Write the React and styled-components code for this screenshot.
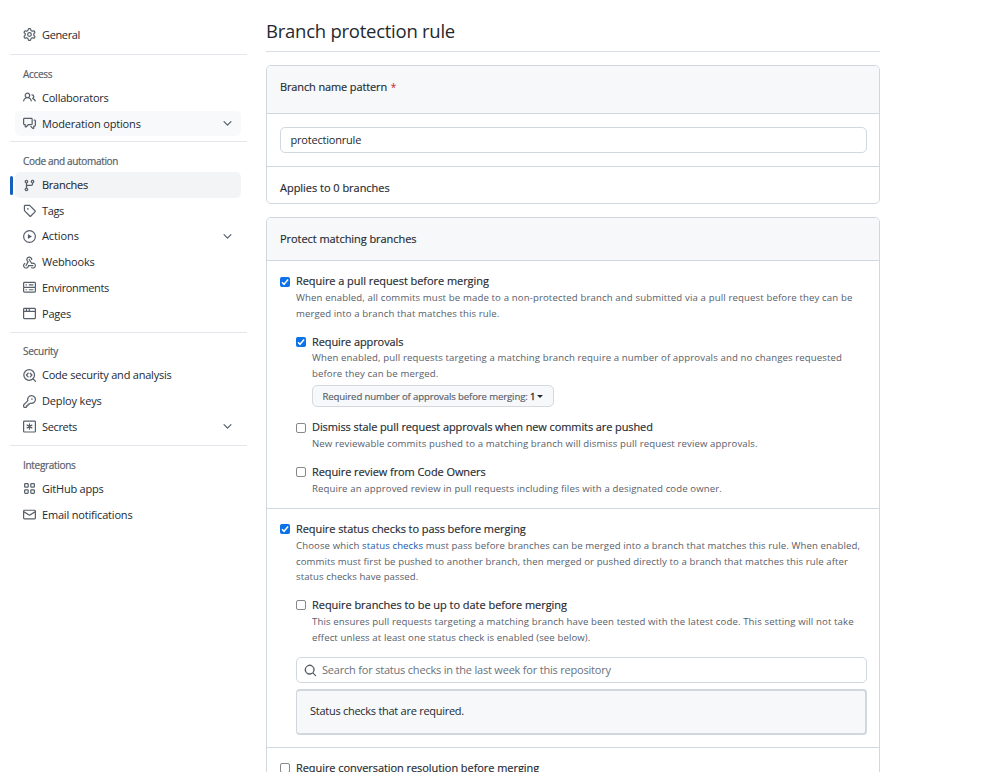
import React from 'react';
import styled, { createGlobalStyle } from 'styled-components';

const Global = createGlobalStyle`
  * { box-sizing: border-box; }
  html, body { margin: 0; background: #fff; }
  body {
    height: 772px;
    overflow: hidden;
    font-family: "Open Sans", "Noto Sans", sans-serif;
    font-size: 11px;
    color: #24292f;
  }
`;

const paths = {
  gear: 'M8 0a8.2 8.2 0 0 1 .701.031C9.444.095 9.99.645 10.16 1.29l.288 1.107c.018.066.079.158.212.224.231.114.454.243.668.386.123.082.233.09.299.071l1.103-.303c.644-.176 1.392.021 1.82.63.27.385.506.792.704 1.218.315.675.111 1.422-.364 1.891l-.814.806c-.049.048-.098.147-.088.294.016.257.016.515 0 .772-.01.147.038.246.088.294l.814.806c.475.469.679 1.216.364 1.891a7.977 7.977 0 0 1-.704 1.217c-.428.61-1.176.807-1.82.63l-1.102-.302c-.067-.019-.177-.011-.3.071a5.909 5.909 0 0 1-.668.386c-.133.066-.194.158-.211.224l-.29 1.106c-.168.646-.715 1.196-1.458 1.26a8.006 8.006 0 0 1-1.402 0c-.743-.064-1.289-.614-1.458-1.26l-.289-1.106c-.018-.066-.079-.158-.212-.224a5.738 5.738 0 0 1-.668-.386c-.123-.082-.233-.09-.299-.071l-1.103.303c-.644.176-1.392-.021-1.82-.63a8.12 8.12 0 0 1-.704-1.218c-.315-.675-.111-1.422.363-1.891l.815-.806c.05-.048.098-.147.088-.294a6.214 6.214 0 0 1 0-.772c.01-.147-.038-.246-.088-.294l-.815-.806C.635 6.045.431 5.298.746 4.623a7.92 7.92 0 0 1 .704-1.217c.428-.61 1.176-.807 1.82-.63l1.102.302c.067.019.177.011.3-.071.214-.143.437-.272.668-.386.133-.066.194-.158.211-.224l.29-1.106C6.009.645 6.556.095 7.299.03 7.53.01 7.764 0 8 0Zm-.571 1.525c-.036.003-.108.036-.137.146l-.289 1.105c-.147.561-.549.967-.998 1.189-.173.086-.34.183-.5.29-.417.278-.97.423-1.529.27l-1.103-.303c-.109-.03-.175.016-.195.045-.22.312-.412.644-.573.99-.014.031-.021.11.059.19l.815.806c.411.406.562.957.53 1.456a4.709 4.709 0 0 0 0 .582c.032.499-.119 1.05-.53 1.456l-.815.806c-.081.08-.073.159-.059.19.162.346.353.677.573.989.02.03.085.076.195.046l1.102-.303c.56-.153 1.113-.008 1.53.27.161.107.328.204.501.29.447.222.85.629.997 1.189l.289 1.105c.029.109.101.143.137.146a6.6 6.6 0 0 0 1.142 0c.036-.003.108-.036.137-.146l.289-1.105c.147-.561.549-.967.998-1.189.173-.086.34-.183.5-.29.417-.278.97-.423 1.529-.27l1.103.303c.109.029.175-.016.195-.045.22-.313.411-.644.573-.99.014-.031.021-.11-.059-.19l-.815-.806c-.411-.406-.562-.957-.53-1.456a4.709 4.709 0 0 0 0-.582c-.032-.499.119-1.05.53-1.456l.815-.806c.081-.08.073-.159.059-.19a6.464 6.464 0 0 0-.573-.989c-.02-.03-.085-.076-.195-.046l-1.102.303c-.56.153-1.113.008-1.53-.27a4.44 4.44 0 0 0-.501-.29c-.447-.222-.85-.629-.997-1.189l-.289-1.105c-.029-.11-.101-.143-.137-.146a6.6 6.6 0 0 0-1.142 0ZM11 8a3 3 0 1 1-6 0 3 3 0 0 1 6 0ZM9.5 8a1.5 1.5 0 1 0-3.001.001A1.5 1.5 0 0 0 9.5 8Z',
  people: 'M2 5.5a3.5 3.5 0 1 1 5.898 2.549 5.508 5.508 0 0 1 3.034 4.084.75.75 0 1 1-1.482.235 4 4 0 0 0-7.9 0 .75.75 0 0 1-1.482-.236A5.507 5.507 0 0 1 3.102 8.05 3.493 3.493 0 0 1 2 5.5ZM11 4a3.001 3.001 0 0 1 2.22 5.018 5.01 5.01 0 0 1 2.56 3.012.749.749 0 0 1-.885.954.752.752 0 0 1-.549-.514 3.507 3.507 0 0 0-2.522-2.372.75.75 0 0 1-.574-.73v-.352a.75.75 0 0 1 .416-.672A1.5 1.5 0 0 0 11 5.5.75.75 0 0 1 11 4Zm-5.5-.5a2 2 0 1 0-.001 3.999A2 2 0 0 0 5.5 3.5Z',
  discussion: 'M1.75 1h8.5c.966 0 1.75.784 1.75 1.75v5.5A1.75 1.75 0 0 1 10.25 10H7.061l-2.574 2.573A1.458 1.458 0 0 1 2 11.543V10h-.25A1.75 1.75 0 0 1 0 8.25v-5.5C0 1.784.784 1 1.75 1ZM1.5 2.75v5.5c0 .138.112.25.25.25h1a.75.75 0 0 1 .75.75v2.19l2.72-2.72a.749.749 0 0 1 .53-.22h3.5a.25.25 0 0 0 .25-.25v-5.5a.25.25 0 0 0-.25-.25h-8.5a.25.25 0 0 0-.25.25Zm13 2a.25.25 0 0 0-.25-.25h-.5a.75.75 0 0 1 0-1.5h.5c.966 0 1.75.784 1.75 1.75v5.5A1.75 1.75 0 0 1 14.25 12H14v1.543a1.458 1.458 0 0 1-2.487 1.03L9.22 12.28a.749.749 0 1 1 1.06-1.06l2.22 2.22v-2.19a.75.75 0 0 1 .75-.75h1a.25.25 0 0 0 .25-.25Z',
  chevron: 'M12.78 5.22a.749.749 0 0 1 0 1.06l-4.25 4.25a.749.749 0 0 1-1.06 0L3.22 6.28a.749.749 0 1 1 1.06-1.06L8 8.939l3.72-3.719a.749.749 0 0 1 1.06 0Z',
  branch: 'M9.5 3.25a2.25 2.25 0 1 1 3 2.122V6A2.5 2.5 0 0 1 10 8.5H6a1 1 0 0 0-1 1v1.128a2.251 2.251 0 1 1-1.5 0V5.372a2.25 2.25 0 1 1 1.5 0v1.836A2.493 2.493 0 0 1 6 7h4a1 1 0 0 0 1-1v-.628A2.25 2.25 0 0 1 9.5 3.25Zm-6 0a.75.75 0 1 0 1.5 0 .75.75 0 0 0-1.5 0Zm8.25-.75a.75.75 0 1 0 0 1.5.75.75 0 0 0 0-1.5ZM4.25 12a.75.75 0 1 0 0 1.5.75.75 0 0 0 0-1.5Z',
  tag: 'M1 7.775V2.75C1 1.784 1.784 1 2.75 1h5.025c.464 0 .91.184 1.238.513l6.25 6.25a1.75 1.75 0 0 1 0 2.474l-5.026 5.026a1.75 1.75 0 0 1-2.474 0l-6.25-6.25A1.752 1.752 0 0 1 1 7.775Zm1.5 0c0 .066.026.13.073.177l6.25 6.25a.25.25 0 0 0 .354 0l5.025-5.025a.25.25 0 0 0 0-.354l-6.25-6.25a.25.25 0 0 0-.177-.073H2.75a.25.25 0 0 0-.25.25ZM6 5a1 1 0 1 1 0 2 1 1 0 0 1 0-2Z',
  play: 'M8 0a8 8 0 1 1 0 16A8 8 0 0 1 8 0ZM1.5 8a6.5 6.5 0 1 0 13 0 6.5 6.5 0 0 0-13 0Zm4.879-2.773 4.264 2.559a.25.25 0 0 1 0 .428l-4.264 2.559A.25.25 0 0 1 6 10.559V5.442a.25.25 0 0 1 .379-.215Z',
  webhook: 'M5.5 4.25a2.25 2.25 0 0 1 4.5 0 .75.75 0 0 0 1.5 0 3.75 3.75 0 1 0-6.14 2.889l-2.272 4.258a.75.75 0 0 0 1.324.706L7 7.25a.75.75 0 0 0-.309-1.015A2.25 2.25 0 0 1 5.5 4.25ZM7.364 3.607a.75.75 0 0 1 1.03.257l2.608 4.349a3.75 3.75 0 1 1-.628 6.785.75.75 0 0 1 .752-1.299 2.25 2.25 0 1 0-.033-3.88.75.75 0 0 1-1.03-.256L7.107 4.636a.75.75 0 0 1 .257-1.03ZM2.9 8.776A.75.75 0 0 1 2.625 9.8 2.25 2.25 0 1 0 6 11.75a.75.75 0 0 1 .75-.751h5.5a.75.75 0 0 1 0 1.5H7.425a3.751 3.751 0 1 1-5.55-3.998.75.75 0 0 1 1.024.274Z',
  server: 'M1.75 1h12.5c.966 0 1.75.784 1.75 1.75v4c0 .372-.116.717-.314 1 .198.283.314.628.314 1v4a1.75 1.75 0 0 1-1.75 1.75H1.75A1.75 1.75 0 0 1 0 12.75v-4c0-.358.109-.707.314-1a1.739 1.739 0 0 1-.314-1v-4C0 1.784.784 1 1.75 1ZM1.5 2.75v4c0 .138.112.25.25.25h12.5a.25.25 0 0 0 .25-.25v-4a.25.25 0 0 0-.25-.25H1.75a.25.25 0 0 0-.25.25Zm.25 5.75a.25.25 0 0 0-.25.25v4c0 .138.112.25.25.25h12.5a.25.25 0 0 0 .25-.25v-4a.25.25 0 0 0-.25-.25ZM7 4.75A.75.75 0 0 1 7.75 4h4.5a.75.75 0 0 1 0 1.5h-4.5A.75.75 0 0 1 7 4.75ZM7.75 10h4.5a.75.75 0 0 1 0 1.5h-4.5a.75.75 0 0 1 0-1.5ZM3 4.75A.75.75 0 0 1 3.75 4h.5a.75.75 0 0 1 0 1.5h-.5A.75.75 0 0 1 3 4.75ZM3.75 10h.5a.75.75 0 0 1 0 1.5h-.5a.75.75 0 0 1 0-1.5Z',
  browser: 'M0 2.75C0 1.784.784 1 1.75 1h12.5c.966 0 1.75.784 1.75 1.75v10.5A1.75 1.75 0 0 1 14.25 15H1.75A1.75 1.75 0 0 1 0 13.25ZM14.5 6h-13v7.25c0 .138.112.25.25.25h12.5a.25.25 0 0 0 .25-.25Zm-6-3.5v2h6V2.75a.25.25 0 0 0-.25-.25ZM5 2.5v2h2v-2Zm-3.25 0a.25.25 0 0 0-.25.25V4.5h2v-2Z',
  key: 'M10.5 0a5.499 5.499 0 1 1-1.288 10.848l-.932.932a.749.749 0 0 1-.53.22H7v.75a.749.749 0 0 1-.22.53l-.5.5a.749.749 0 0 1-.53.22H5v.75a.749.749 0 0 1-.22.53l-.5.5a.749.749 0 0 1-.53.22h-2A1.75 1.75 0 0 1 0 14.25v-2c0-.199.079-.389.22-.53l4.932-4.932A5.5 5.5 0 0 1 10.5 0Zm-4 5.5c-.001.431.069.86.205 1.269a.75.75 0 0 1-.181.768L1.5 12.56v1.69c0 .138.112.25.25.25h1.69l.06-.06v-1.19a.75.75 0 0 1 .75-.75h1.19l.06-.06v-1.19a.75.75 0 0 1 .75-.75h1.19l1.023-1.025a.75.75 0 0 1 .768-.18A4 4 0 1 0 6.5 5.5ZM11 6a1 1 0 1 1 0-2 1 1 0 0 1 0 2Z',
  mail: 'M1.75 2h12.5c.966 0 1.75.784 1.75 1.75v8.5A1.75 1.75 0 0 1 14.25 14H1.75A1.75 1.75 0 0 1 0 12.25v-8.5C0 2.784.784 2 1.75 2ZM1.5 12.251c0 .138.112.25.25.25h12.5a.25.25 0 0 0 .25-.25V5.809L8.38 9.397a.75.75 0 0 1-.76 0L1.5 5.809v6.442Zm13-8.181v-.32a.25.25 0 0 0-.25-.25H1.75a.25.25 0 0 0-.25.25v.32L8 7.88Z',
  search: 'M10.68 11.74a6 6 0 0 1-7.922-8.982 6 6 0 0 1 8.982 7.922l3.04 3.04a.749.749 0 1 1-1.06 1.06ZM11.5 7a4.499 4.499 0 1 0-8.997 0A4.499 4.499 0 0 0 11.5 7Z',
};

const strokes = {
  codescan: (
    <>
      <circle cx="7.6" cy="7.4" r="6.6" />
      <path d="M12.4 12.2 15.3 15.1M6.3 5.2 4.2 7.4l2.1 2.2M8.9 5.2 11 7.4 8.9 9.6" />
    </>
  ),
  asterisk: (
    <>
      <rect x=".75" y="1.25" width="14.5" height="13.5" rx="1" />
      <path d="M8 4.7v6.6M5.1 6.3l5.8 3.4M10.9 6.3 5.1 9.7" />
    </>
  ),
  apps: (
    <>
      <rect x="2" y="2" width="4.4" height="4.4" rx="1" />
      <rect x="9.6" y="2" width="4.4" height="4.4" rx="1" />
      <rect x="2" y="9.6" width="4.4" height="4.4" rx="1" />
      <rect x="9.6" y="9.6" width="4.4" height="4.4" rx="1" />
    </>
  ),
};

const Svg = styled.svg`
  flex: none;
  display: block;
  width: 13px;
  height: 13px;
  color: #57606a;
`;

function Icon({ name }) {
  return (
    <Svg viewBox="0 0 16 16" aria-hidden="true">
      {paths[name]
        ? <path fill="currentColor" d={paths[name]} />
        : <g fill="none" stroke="currentColor" strokeWidth="1.5" strokeLinecap="round" strokeLinejoin="round">{strokes[name]}</g>}
    </Svg>
  );
}

const Page = styled.div`
  display: flex;
  align-items: flex-start;
  gap: 19px;
  padding-left: 10px;
`;

const Sidebar = styled.nav`
  width: 237px;
  padding-top: 22px;
`;

const NavGroup = styled.section`
  padding-bottom: 5.2px;
  & + & { border-top: 1px solid #e3e6ea; }
  &:first-child { padding-bottom: 6.2px; }
  &:nth-child(2) { margin-bottom: -0.4px; }
`;

const NavHeading = styled.h3`
  display: flex;
  align-items: center;
  height: 30.1px;
  margin: 0;
  padding: 7.4px 0 0 13px;
  font-size: 10px;
  font-weight: 400;
  letter-spacing: ${(p) => p.$track}px;
  color: #57606a;
  -webkit-text-stroke: 0.2px currentColor;
`;

const NavRow = styled.a`
  position: relative;
  display: flex;
  align-items: center;
  gap: 6px;
  height: 25.7px;
  margin: 0 6px 0 5px;
  padding: 0 7px 0 8px;
  border-radius: 5px;
  letter-spacing: ${(p) => p.$track}px;
  background: ${(p) => (p.$current ? '#f3f4f6' : p.$hover ? '#f8f9fb' : 'transparent')};
  -webkit-text-stroke: ${(p) => (p.$current ? '0.1px' : '0')} currentColor;
  &::before {
    content: "";
    display: ${(p) => (p.$current ? 'block' : 'none')};
    position: absolute;
    left: -5px;
    top: 3.5px;
    width: 3px;
    height: 19px;
    border-radius: 2px;
    background: #1460bd;
  }
`;

const NavText = styled.span`
  flex: 1;
  padding-bottom: 1px;
`;

const Main = styled.main`
  width: 614px;
`;

const Title = styled.h1`
  margin: 0 0 14px;
  height: 52px;
  padding-top: 18px;
  border-bottom: 1px solid #d8dee4;
  font-size: 18.5px;
  line-height: 26px;
  font-weight: 400;
  letter-spacing: -0.25px;
`;

const Card = styled.section`
  margin-bottom: 13px;
  border: 1px solid #d0d7de;
  border-radius: 5px;
  &:first-of-type { margin-top: -1px; }
`;

const CardHeader = styled.header`
  height: ${(p) => p.$height}px;
  padding: ${(p) => p.$top}px 13px 0;
  border-bottom: 1px solid #d0d7de;
  border-radius: 4px 4px 0 0;
  background: #f6f8fa;
`;

const Strong = styled.div`
  font-size: 11px;
  line-height: 16px;
  white-space: nowrap;
  letter-spacing: ${(p) => p.$track || 0}px;
  -webkit-text-stroke: 0.15px currentColor;
`;

const Required = styled.span`
  margin-left: 1px;
  font-size: 10px;
  color: #cf222e;
  -webkit-text-stroke: 0;
`;

const FieldRow = styled.div`
  padding: 13px 12px 13px 13px;
  border-bottom: 1px solid #d0d7de;
`;

const TextField = styled.div`
  display: flex;
  align-items: center;
  height: 26px;
  padding: 0 9px 2px 9.4px;
  border: 1px solid #d0d7de;
  border-radius: 5px;
  letter-spacing: -0.19px;
`;

const SearchField = styled(TextField)`
  gap: 5px;
  padding: 0 7px;
  color: #6a727c;
  letter-spacing: -0.2px;
  & > svg { margin-top: 2px; }
`;

const Footnote = styled.div`
  height: 36px;
  padding: 13px 13px 0;
`;

const Rule = styled.div`
  padding: 12px 12px ${(p) => p.$bottom}px 13px;
  & + & { border-top: 1px solid #d0d7de; }
`;

const OptionGrid = styled.div`
  display: grid;
  grid-template-columns: 10px 1fr;
  column-gap: 6px;
  margin-top: ${(p) => p.$gap || 0}px;
`;

const Box = styled.span`
  display: block;
  width: 10px;
  height: 10px;
  margin-top: ${(p) => p.$drop}px;
  border: 1px solid ${(p) => (p.$on ? '#0b72e7' : '#85888c')};
  border-radius: ${(p) => (p.$on ? 1.5 : 2)}px;
  background: ${(p) => (p.$on ? '#0b72e7' : '#fff')};
`;

const Tick = styled.svg`
  display: block;
  width: 8px;
  height: 8px;
`;

const Help = styled.p`
  margin: ${(p) => (p.$tight ? 0 : 1)}px 0 0;
  font-size: 9.6px;
  line-height: 15.6px;
  color: #57606a;
  white-space: nowrap;
`;

const Line = styled.span`
  display: block;
  letter-spacing: ${(p) => p.$track}px;
`;

const Link = styled.a`color: #2458a6;`;

const SelectButton = styled.button`
  display: flex;
  align-items: center;
  gap: 2px;
  width: 242px;
  height: 22px;
  margin: 3.8px 0 0;
  padding: 1px 9px 0 9.5px;
  border: 1px solid #d5d8dc;
  border-radius: 5px;
  background: #f6f8fa;
  color: #57606a;
  font: 400 9.6px "Open Sans", sans-serif;
  letter-spacing: -0.13px;
  white-space: nowrap;
  -webkit-text-stroke: 0.15px currentColor;
`;

const Count = styled.span`
  color: #24292f;
  -webkit-text-stroke: 0.3px currentColor;
`;

const Caret = styled.span`
  border: 3px solid transparent;
  border-top: 3.5px solid #24292f;
  border-bottom: 0;
`;

const Checks = styled.div`
  display: grid;
  gap: 6px;
  margin: 11.8px 0 0;
`;

const RequiredChecks = styled.div`
  height: 46px;
  padding: 11px 13px;
  border: 2px solid #d0d7de;
  border-left-width: 1px;
  border-radius: 4px;
  background: #f6f8fa;
  line-height: 17px;
  letter-spacing: -0.27px;
`;

function Option({ on, title, track, lines, gap, drop = 3, tight, children }) {
  return (
    <OptionGrid $gap={gap}>
      <Box $on={on} $drop={drop} role="checkbox" aria-checked={!!on}>
        {on && (
          <Tick viewBox="0 0 8 8">
            <path d="M1 4.3 3 6.3 7.1 1.5" fill="none" stroke="#fff" strokeWidth="1.5" />
          </Tick>
        )}
      </Box>
      <div>
        <Strong $track={track}>{title}</Strong>
        <Help $tight={tight}>
          {lines.map(([text, t], i) => <Line key={i} $track={t}>{text}</Line>)}
        </Help>
        {children}
      </div>
    </OptionGrid>
  );
}

const nav = [
  { items: [['gear', 'General', -0.35]] },
  { title: 'Access', track: -0.3, items: [['people', 'Collaborators', -0.22], ['discussion', 'Moderation options', -0.16, { hover: true, more: true }]] },
  {
    title: 'Code and automation', track: -0.33,
    items: [
      ['branch', 'Branches', -0.25, { current: true }],
      ['tag', 'Tags', -0.35],
      ['play', 'Actions', -0.1, { more: true }],
      ['webhook', 'Webhooks', -0.18],
      ['server', 'Environments', -0.36],
      ['browser', 'Pages', -0.2],
    ],
  },
  { title: 'Security', track: -0.27, items: [['codescan', 'Code security and analysis', -0.22], ['key', 'Deploy keys', -0.15], ['asterisk', 'Secrets', -0.35, { more: true }]] },
  { title: 'Integrations', track: -0.3, items: [['apps', 'GitHub apps', -0.22], ['mail', 'Email notifications', -0.19]] },
];

export default function App() {
  return (
    <>
      <Global />
      <Page>
        <Sidebar>
          {nav.map((group, i) => (
            <NavGroup key={i}>
              {group.title && <NavHeading $track={group.track}>{group.title}</NavHeading>}
              {group.items.map(([icon, label, track, state = {}]) => (
                <NavRow key={label} $track={track} $current={state.current} $hover={state.hover}>
                  <Icon name={icon} />
                  <NavText>{label}</NavText>
                  {state.more && <Icon name="chevron" />}
                </NavRow>
              ))}
            </NavGroup>
          ))}
        </Sidebar>
        <Main>
          <Title>Branch protection rule</Title>
          <Card>
            <CardHeader $height={48} $top={13}>
              <Strong $track={-0.13}>Branch name pattern <Required>*</Required></Strong>
            </CardHeader>
            <FieldRow><TextField>protectionrule</TextField></FieldRow>
            <Footnote><Strong $track={-0.03}>Applies to 0 branches</Strong></Footnote>
          </Card>
          <Card>
            <CardHeader $height={43} $top={13}>
              <Strong $track={-0.06}>Protect matching branches</Strong>
            </CardHeader>
            <Rule $bottom={11.4}>
              <Option
                on drop={4} title="Require a pull request before merging" track={-0.06}
                lines={[
                  ['When enabled, all commits must be made to a non-protected branch and submitted via a pull request before they can be', 0.135],
                  ['merged into a branch that matches this rule.', 0.1],
                ]}
              >
                <Option
                  on gap={12.8} tight title="Require approvals" track={-0.1}
                  lines={[
                    ['When enabled, pull requests targeting a matching branch require a number of approvals and no changes requested', 0.12],
                    ['before they can be merged.', 0.12],
                  ]}
                >
                  <SelectButton>
                    <span>Required number of approvals before merging: <Count>1</Count></span>
                    <Caret />
                  </SelectButton>
                </Option>
                <Option
                  gap={12} drop={4} title="Dismiss stale pull request approvals when new commits are pushed" track={-0.1}
                  lines={[['New reviewable commits pushed to a matching branch will dismiss pull request review approvals.', 0.11]]}
                />
                <Option
                  gap={12.4} title="Require review from Code Owners" track={-0.08}
                  lines={[['Require an approved review in pull requests including files with a designated code owner.', 0.118]]}
                />
              </Option>
            </Rule>
            <Rule $bottom={12}>
              <Option
                on title="Require status checks to pass before merging" track={-0.07}
                lines={[
                  [<>Choose which <Link>status checks</Link> must pass before branches can be merged into a branch that matches this rule. When enabled,</>, 0.105],
                  ['commits must first be pushed to another branch, then merged or pushed directly to a branch that matches this rule after', 0.095],
                  ['status checks have passed.', 0.08],
                ]}
              >
                <Option
                  gap={12.2} title="Require branches to be up to date before merging" track={-0.04}
                  lines={[
                    ['This ensures pull requests targeting a matching branch have been tested with the latest code. This setting will not take', 0.12],
                    ['effect unless at least one status check is enabled (see below).', 0.1],
                  ]}
                />
                <Checks>
                  <SearchField><Icon name="search" />Search for status checks in the last week for this repository</SearchField>
                  <RequiredChecks>Status checks that are required.</RequiredChecks>
                </Checks>
              </Option>
            </Rule>
            <Rule $bottom={12}>
              <Option title="Require conversation resolution before merging" track={-0.06} lines={[]} />
            </Rule>
          </Card>
        </Main>
      </Page>
    </>
  );
}
